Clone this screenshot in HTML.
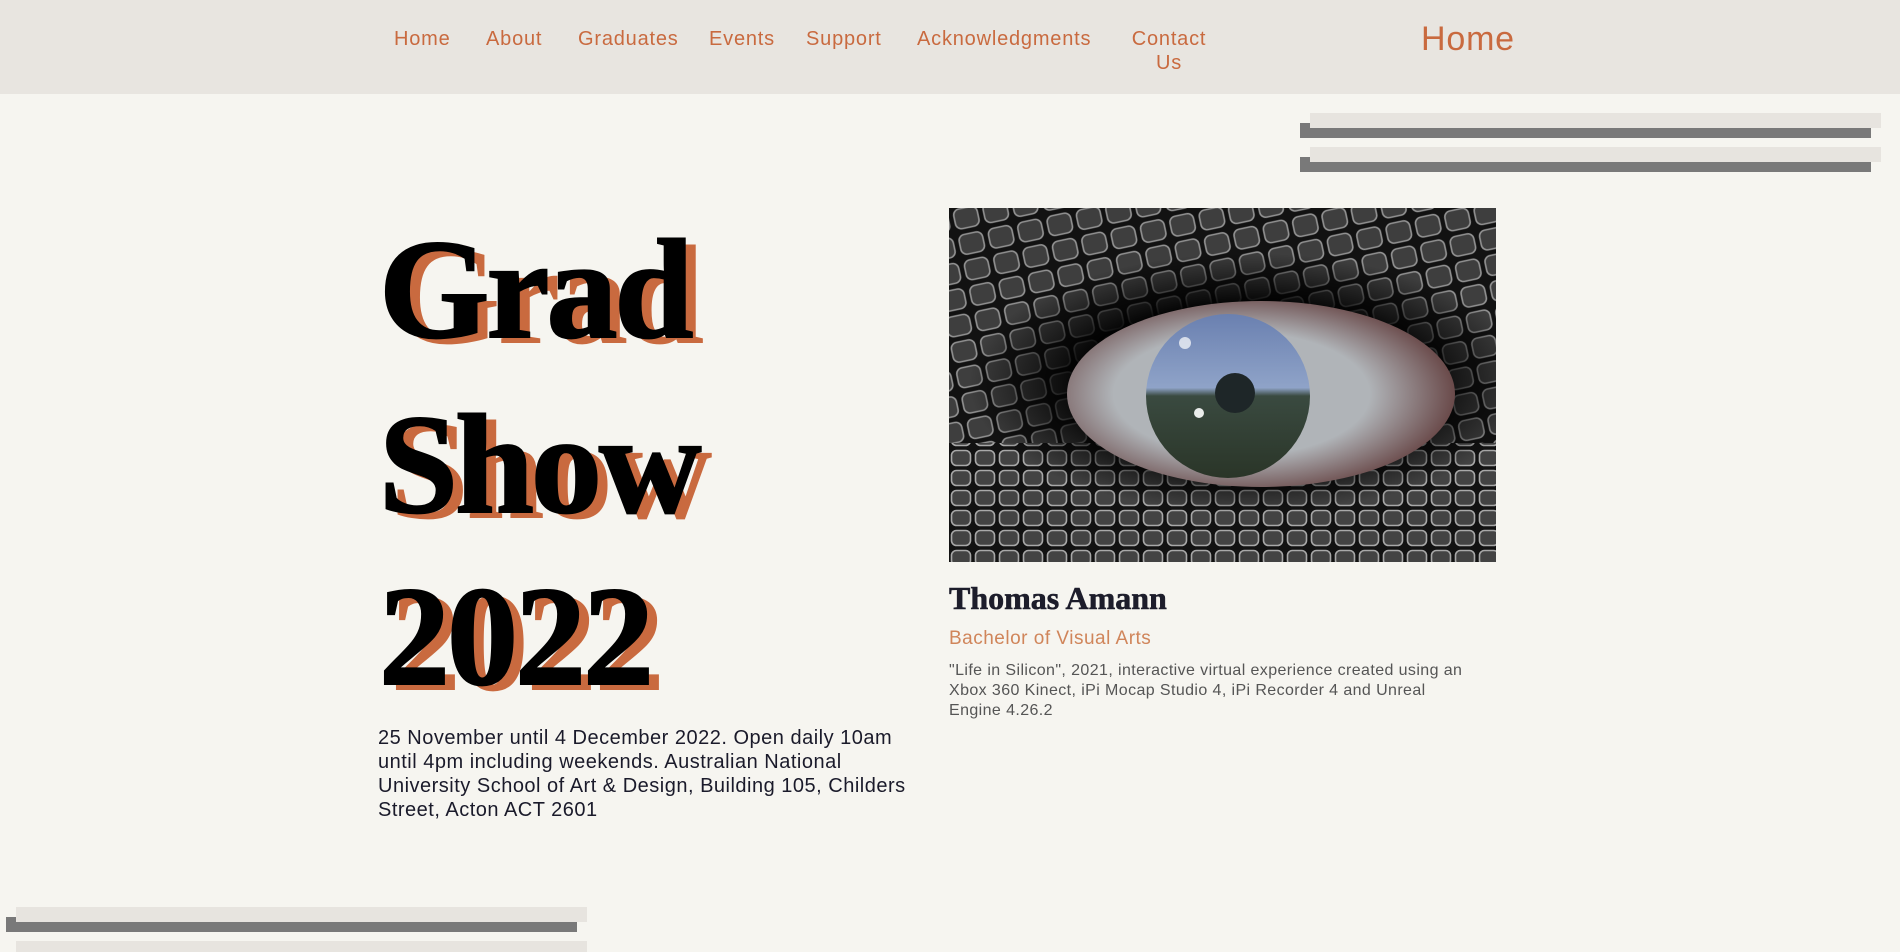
<!DOCTYPE html>
<html><head><meta charset="utf-8">
<style>
*{margin:0;padding:0;box-sizing:border-box}
html,body{width:1900px;height:952px;overflow:hidden;background:#f6f5f0;font-family:"Liberation Sans",sans-serif}
#w{position:relative;width:1900px;height:952px;overflow:hidden}
.hdr{position:absolute;left:0;top:0;width:1900px;height:94px;background:#e8e5e0}
.nav{position:absolute;top:27px;font-size:20px;color:#c96a3f;line-height:24px;letter-spacing:.8px}
.big{position:absolute;left:1421px;top:20px;font-size:34px;color:#c96a3f;letter-spacing:.8px}
.bar{position:absolute}
.l{background:#e7e4df}.d{background:#797979}
.title{position:absolute;left:379px;font-family:"Liberation Serif",serif;font-weight:bold;font-size:142px;color:#000;text-shadow:11px 6px 0 #c96a3f;line-height:1;letter-spacing:-3px;-webkit-text-stroke:2px #000}
.para{position:absolute;left:378px;top:726px;font-size:20px;line-height:24px;color:#1a1a2a;letter-spacing:.5px}
.name{position:absolute;left:949px;top:580px;font-family:"Liberation Serif",serif;font-weight:bold;font-size:32px;color:#1d1d2b;letter-spacing:0;-webkit-text-stroke:.6px #1d1d2b}
.deg{position:absolute;left:949px;top:628px;font-size:19px;color:#d0855a;letter-spacing:.5px}
.desc{position:absolute;left:949px;top:661px;font-size:16px;line-height:20px;color:#555;letter-spacing:.4px}
</style></head><body><div id="w">
<div class="hdr"></div>
<div class="nav" style="left:394px">Home</div>
<div class="nav" style="left:486px">About</div>
<div class="nav" style="left:578px">Graduates</div>
<div class="nav" style="left:709px">Events</div>
<div class="nav" style="left:806px">Support</div>
<div class="nav" style="left:917px">Acknowledgments</div>
<div class="nav" style="left:1130px;text-align:center;width:78px">Contact<br>Us</div>
<div class="big">Home</div>

<div class="bar d" style="left:1300px;top:123px;width:571px;height:15px"></div>
<div class="bar l" style="left:1310px;top:113px;width:571px;height:15px"></div>
<div class="bar d" style="left:1300px;top:157px;width:571px;height:15px"></div>
<div class="bar l" style="left:1310px;top:147px;width:571px;height:15px"></div>

<div class="bar d" style="left:6px;top:917px;width:571px;height:15px"></div>
<div class="bar l" style="left:16px;top:907px;width:571px;height:15px"></div>
<div class="bar l" style="left:16px;top:941px;width:571px;height:11px"></div>

<div class="title" style="top:218px">Grad</div>
<div class="title" style="top:393px">Show</div>
<div class="title" style="top:565px">2022</div>
<div class="para">25 November until 4 December 2022. Open daily 10am<br>until 4pm including weekends. Australian National<br>University School of Art &amp; Design, Building 105, Childers<br>Street, Acton ACT 2601</div>

<svg style="position:absolute;left:949px;top:208px" width="547" height="354" viewBox="0 0 547 354">
<defs>
<pattern id="sc" width="30" height="26" patternUnits="userSpaceOnUse" patternTransform="rotate(-12)">
<rect width="30" height="26" fill="#151515"/>
<rect x="3" y="3" width="24" height="20" rx="6" fill="#474747" stroke="#a8a8a8" stroke-width="1.6"/>
</pattern>
<pattern id="sc2" width="24" height="20" patternUnits="userSpaceOnUse">
<rect width="24" height="20" fill="#151515"/>
<rect x="2.5" y="2.5" width="19" height="15" rx="5" fill="#4d4d4d" stroke="#c0c0c0" stroke-width="1.6"/>
</pattern>
<radialGradient id="eb" cx="50%" cy="50%" r="50%">
<stop offset="0.6" stop-color="#000" stop-opacity=".95"/><stop offset="1" stop-color="#000" stop-opacity="0"/>
</radialGradient>
<linearGradient id="ir" x1="0" y1="0" x2="0" y2="1">
<stop offset="0" stop-color="#6a80b0"/><stop offset=".45" stop-color="#8fa3c8"/><stop offset=".5" stop-color="#3a4a40"/><stop offset="1" stop-color="#2a3528"/>
</linearGradient>
<radialGradient id="wh" cx="45%" cy="50%" r="55%"><stop offset=".6" stop-color="#b0b4b8"/><stop offset="1" stop-color="#6a4a4a"/></radialGradient>
</defs>
<rect width="547" height="354" fill="url(#sc)"/>
<rect y="235" width="547" height="119" fill="url(#sc2)"/>
<rect width="547" height="354" fill="#000" opacity=".12"/>
<ellipse cx="300" cy="175" rx="280" ry="130" fill="url(#eb)"/>
<ellipse cx="312" cy="186" rx="194" ry="93" fill="url(#wh)"/>
<circle cx="279" cy="188" r="82" fill="url(#ir)"/>
<circle cx="286" cy="185" r="20" fill="#1e2628"/>
<circle cx="250" cy="205" r="5" fill="#fff" opacity=".9"/>
<circle cx="236" cy="135" r="6" fill="#fff" opacity=".7"/>
</svg>

<div class="name">Thomas Amann</div>
<div class="deg">Bachelor of Visual Arts</div>
<div class="desc">"Life in Silicon", 2021, interactive virtual experience created using an<br>Xbox 360 Kinect, iPi Mocap Studio 4, iPi Recorder 4 and Unreal<br>Engine 4.26.2</div>
</div></body></html>
